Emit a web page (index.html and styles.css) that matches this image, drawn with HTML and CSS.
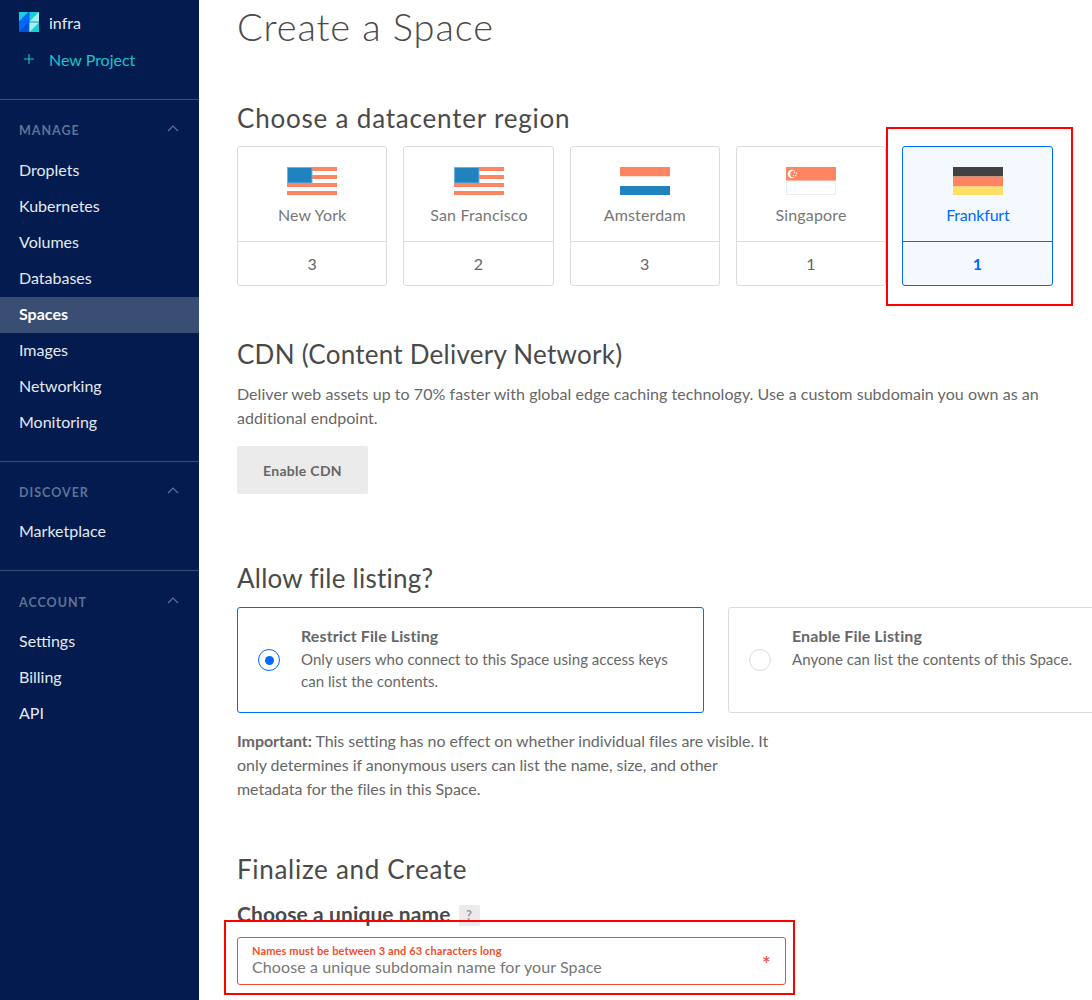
FILE: index.html
```html
<!DOCTYPE html>
<html lang="en">
<head>
<meta charset="utf-8">
<title>Create a Space</title>
<link rel="stylesheet" href="styles.css">
</head>
<body>
<div class="app">
  <aside class="sidebar">
    <div class="projects">
      <div class="project">
        <svg class="project-icon" width="20" height="20" viewBox="0 0 20 20"><rect width="20" height="20" rx="1" fill="#0a5be8"/><path d="M0 0h9.500L0 9.500z" fill="#14d2d8"/><path d="M9.500 0v9.500H0z" fill="#0069ff"/><path d="M10.500 0H20v9.500H10.500z" fill="#14d2d8"/><path d="M20 0v9.500H10.500z" fill="#a4f0ea"/><path d="M0 10.500h9.500L0 20z" fill="#0069ff"/><path d="M9.500 10.500V20H0z" fill="#0050d8"/><path d="M10.500 10.500H20V20H10.500z" fill="#14d2d8"/><path d="M10.500 10.500H20L10.500 20z" fill="#a4f0ea"/></svg>
        <span>infra</span>
      </div>
      <div class="project new">
        <svg class="plus" width="12" height="12" viewBox="0 0 12 12"><path d="M6 1v10M1 6h10" stroke="#18c5cc" stroke-width="1.100" fill="none"/></svg>
        <span>New Project</span>
      </div>
    </div>
    <section class="nav-group">
      <div class="nav-head"><span>MANAGE</span><svg width="12" height="7" viewBox="0 0 12 7"><path d="M1 6l5-5 5 5" stroke="#5f7396" stroke-width="1.200" fill="none"/></svg></div>
      <ul class="nav-list">
        <li>Droplets</li><li>Kubernetes</li><li>Volumes</li><li>Databases</li><li class="active">Spaces</li><li>Images</li><li>Networking</li><li>Monitoring</li>
      </ul>
    </section>
    <section class="nav-group">
      <div class="nav-head"><span>DISCOVER</span><svg width="12" height="7" viewBox="0 0 12 7"><path d="M1 6l5-5 5 5" stroke="#5f7396" stroke-width="1.200" fill="none"/></svg></div>
      <ul class="nav-list"><li>Marketplace</li></ul>
    </section>
    <section class="nav-group">
      <div class="nav-head"><span>ACCOUNT</span><svg width="12" height="7" viewBox="0 0 12 7"><path d="M1 6l5-5 5 5" stroke="#5f7396" stroke-width="1.200" fill="none"/></svg></div>
      <ul class="nav-list"><li>Settings</li><li>Billing</li><li>API</li></ul>
    </section>
  </aside>
  <main class="main">
    <h1 class="title">Create a Space</h1>
    <h2 class="heading region-heading">Choose a datacenter region</h2>
    <div class="regions">
      <div class="region">
        <div class="region-top">
          <svg class="flag" width="50" height="28" viewBox="0 0 50 28"><path fill="#ff8562" d="M0 0h50v4H0zM0 8h50v4H0zM0 16h50v4H0zM0 24h50v4H0z"/><rect x=".5" y=".5" width="24.500" height="15.500" fill="#2082bf" stroke="#6fb3dc"/></svg>
          <div>New York</div>
        </div>
        <div class="region-count">3</div>
      </div>
      <div class="region">
        <div class="region-top">
          <svg class="flag" width="50" height="28" viewBox="0 0 50 28"><path fill="#ff8562" d="M0 0h50v4H0zM0 8h50v4H0zM0 16h50v4H0zM0 24h50v4H0z"/><rect x=".5" y=".5" width="24.500" height="15.500" fill="#2082bf" stroke="#6fb3dc"/></svg>
          <div>San Francisco</div>
        </div>
        <div class="region-count">2</div>
      </div>
      <div class="region">
        <div class="region-top">
          <svg class="flag" width="50" height="28" viewBox="0 0 50 28"><rect width="50" height="9.500" fill="#ff8562"/><rect y="9.500" width="50" height="9.500" fill="#fff"/><rect y="19" width="50" height="9" fill="#2082bf"/></svg>
          <div>Amsterdam</div>
        </div>
        <div class="region-count">3</div>
      </div>
      <div class="region">
        <div class="region-top">
          <svg class="flag" width="50" height="28" viewBox="0 0 50 28"><rect width="50" height="14" fill="#ff8562"/><rect x=".5" y="14" width="49" height="13.500" fill="#fff" stroke="#e8eef0"/><circle cx="6" cy="7" r="4.300" fill="#fff"/><circle cx="7.800" cy="7" r="3.600" fill="#ff8562"/><circle cx="8.500" cy="5.200" r=".7" fill="#fff"/><circle cx="10.500" cy="6.300" r=".7" fill="#fff"/><circle cx="9.800" cy="8.500" r=".7" fill="#fff"/><circle cx="7.500" cy="8.500" r=".7" fill="#fff"/></svg>
          <div>Singapore</div>
        </div>
        <div class="region-count">1</div>
      </div>
      <div class="region selected">
        <div class="region-top">
          <svg class="flag" width="50" height="28" viewBox="0 0 50 28"><rect width="50" height="9.500" fill="#414141"/><rect y="9.500" width="50" height="10" fill="#ff8562"/><rect y="19.500" width="50" height="8.500" fill="#ffe066"/></svg>
          <div>Frankfurt</div>
        </div>
        <div class="region-count">1</div>
      </div>
    </div>
    <h2 class="heading cdn-heading">CDN (Content Delivery Network)</h2>
    <p class="copy cdn-copy">Deliver web assets up to 70% faster with global edge caching technology. Use a custom subdomain you own as an additional endpoint.</p>
    <button class="cdn-button" type="button">Enable CDN</button>
    <h2 class="heading listing-heading">Allow file listing?</h2>
    <div class="listing">
      <div class="listing-card selected">
        <span class="radio on"></span>
        <div class="listing-text"><strong>Restrict File Listing</strong><span>Only users who connect to this Space using access keys can list the contents.</span></div>
      </div>
      <div class="listing-card other">
        <span class="radio"></span>
        <div class="listing-text"><strong>Enable File Listing</strong><span>Anyone can list the contents of this Space.</span></div>
      </div>
    </div>
    <p class="copy important"><strong>Important:</strong> This setting has no effect on whether individual files are visible. It only determines if anonymous users can list the name, size, and other metadata for the files in this Space.</p>
    <h2 class="heading final-heading">Finalize and Create</h2>
    <div class="name-row"><h3>Choose a unique name</h3><span class="help">?</span></div>
    <div class="name-input">
      <div class="name-text">
        <small>Names must be between 3 and 63 characters long</small>
        <span>Choose a unique subdomain name for your Space</span>
      </div>
      <span class="asterisk">*</span>
    </div>
  </main>
</div>
<div class="annot annot-region"></div>
<div class="annot annot-name"></div>
</body>
</html>
```
FILE: styles.css
```css
* { box-sizing: border-box; }
html, body { margin: 0; height: 1000px; overflow: hidden; background: #fff; }
body { font-family: "Lato", "Open Sans", sans-serif; color: #676767; position: relative; }
.app { display: flex; height: 1000px; overflow: hidden; }

.sidebar { width: 199px; flex: none; background: #031b4e; color: #e4e9f0; font-size: 16px; }
.projects { height: 100px; padding-top: 4px; border-bottom: 1px solid #3a4d72; }
.project { display: flex; align-items: center; height: 36px; padding-left: 19px; gap: 10px; }
.project-icon { flex: none; }
.project.new { margin-top: 1px; color: #18c5cc; }
.plus { margin: 0 4px 0 4px; }
.nav-group { border-bottom: 1px solid #3a4d72; padding: 20px 0 20px; }
.nav-group:last-child { border-bottom: 0; padding-top: 21px; }
.nav-head { display: flex; justify-content: space-between; align-items: center; height: 20px; padding: 0 20px 0 19px; font-size: 12.500px; font-weight: 700; letter-spacing: 1px; color: #5f7396; margin-bottom: 13px; }
.nav-group + .nav-group .nav-head { margin-bottom: 12px; }
.nav-head svg { margin-top: -3px; }
.nav-list { list-style: none; margin: 0; padding: 0; }
.nav-list li { height: 36px; line-height: 34px; padding-left: 19px; }
.nav-list li.active { background: #3a4d72; color: #fff; font-weight: 700; }

.main { flex: 1; min-width: 0; padding-left: 38px; }
.title { margin: 0; font-size: 38px; line-height: 46px; font-weight: 300; color: #4a4a4a; padding-top: 3px; letter-spacing: .9px; }
.heading { margin: 0; font-size: 26px; line-height: 32px; font-weight: 400; color: #4a4a4a; }
.region-heading { margin-top: 53px; letter-spacing: .8px; }
.regions { display: grid; grid-template-columns: repeat(5, 1fr); gap: 16px; width: 815.500px; margin-top: 12px; }
.region { height: 140px; border: 1px solid #dcdcdc; border-radius: 3px; text-align: center; font-size: 16px; letter-spacing: .15px; color: #777; }
.region-top { height: 95px; border-bottom: 1px solid #dcdcdc; padding-top: 20px; }
.region:nth-child(3n+2) .region-top { padding-left: 1px; }
.flag { display: block; margin: 0 auto 10px; }
.region-count { line-height: 44px; color: #666; }
.region.selected { border-color: #0069ff; background: #f4f8ff; color: #0069ff; }
.region.selected .region-top { border-color: #0069ff; letter-spacing: -.2px; }
.region.selected .region-count { color: #0069ff; font-weight: 700; }

.cdn-heading { margin-top: 52px; letter-spacing: .25px; }
.copy { margin: 0; font-size: 16px; line-height: 24px; color: #676767; letter-spacing: .05px; }
.cdn-copy { margin-top: 12px; width: 816px; }
.cdn-button { display: block; margin-top: 16px; width: 131px; height: 48px; border: 0; border-radius: 2px; background: #ebebeb; color: #666; font: 700 14px "Lato", sans-serif; letter-spacing: .3px; }
.listing-heading { margin-top: 68px; letter-spacing: .25px; }
.listing { display: flex; gap: 24px; margin-top: 13px; width: 900px; }
.listing-card { display: flex; align-items: flex-start; height: 106px; border: 1px solid #dcdcdc; border-radius: 3px; padding: 17px 20px; gap: 21px; }
.listing-card.selected { width: 467px; flex: none; border-color: #0069ff; }
.listing-card.other { flex: 1; }
.radio { flex: none; width: 22px; height: 22px; margin-top: 24px; border: 1px solid #dcdcdc; border-radius: 50%; background: #fff; display: flex; align-items: center; justify-content: center; }
.radio.on { border-color: #0069ff; }
.radio.on::after { content: ""; width: 9px; height: 9px; border-radius: 50%; background: #0069ff; }
.listing-text { font-size: 15px; line-height: 22px; letter-spacing: .05px; }
.listing-text strong { display: block; font-size: 16px; letter-spacing: .1px; }
.listing-text span { display: block; margin-top: 1px; }
.important { margin-top: 16px; width: 540px; letter-spacing: -.05px; }
.final-heading { margin-top: 52px; letter-spacing: .7px; }
.name-row { display: flex; align-items: center; gap: 8px; margin-top: 16px; height: 28px; }
.name-row h3 { margin: 0 0 4px; font-size: 21px; font-weight: 700; letter-spacing: .1px; color: #4a4a4a; }
.help { width: 21px; height: 21px; border-radius: 2px; background: #ebebeb; color: #999; font-size: 13px; font-weight: 700; text-align: center; line-height: 21px; }
.name-input { display: flex; justify-content: space-between; align-items: center; width: 549px; height: 48px; margin-top: 8px; border: 1px solid #f04e2e; border-radius: 3px; padding: 0 14px; }
.name-text small { display: block; font-size: 11px; line-height: 12px; font-weight: 700; letter-spacing: .13px; color: #f04e2e; }
.name-text span { display: block; font-size: 16px; line-height: 20px; letter-spacing: .1px; color: #777; }
.asterisk { color: #f04e2e; font-size: 22px; line-height: 20px; margin-top: 6px; }

.annot { position: absolute; border: 2px solid #f00; pointer-events: none; }
.annot-region { left: 886px; top: 127px; width: 187px; height: 179px; }
.annot-name { left: 224px; top: 920px; width: 571px; height: 75px; }
```
